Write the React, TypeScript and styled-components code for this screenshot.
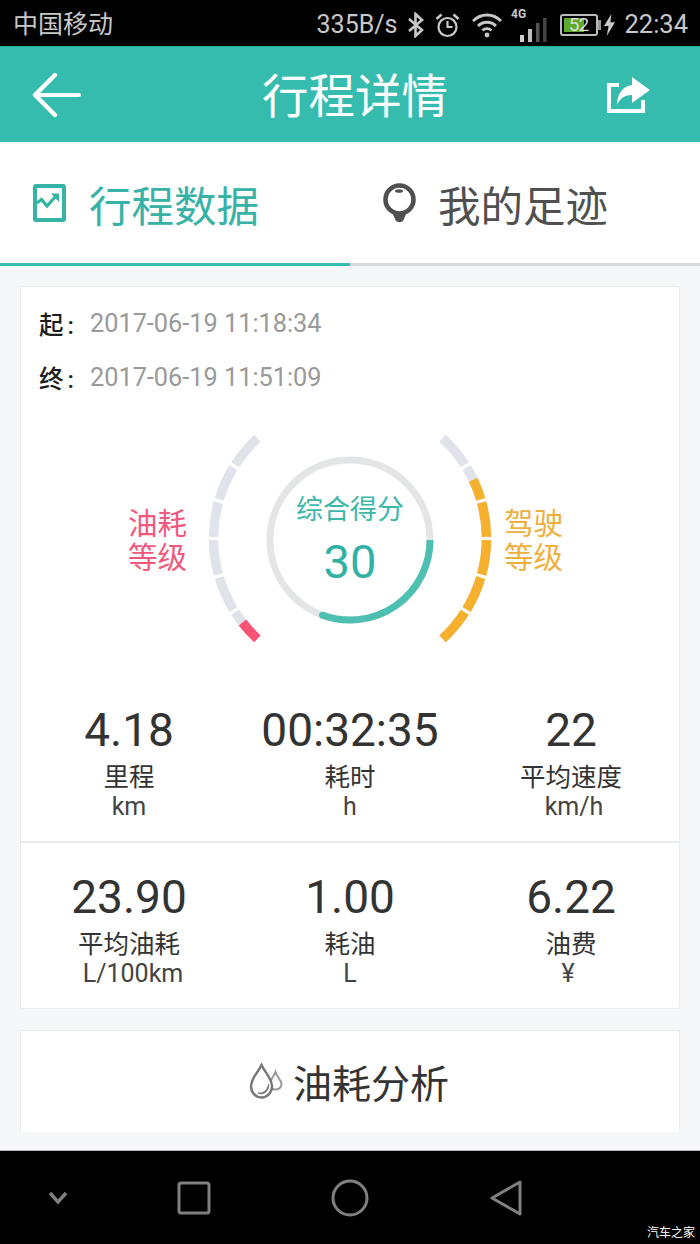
import React from "react";
import styled, { createGlobalStyle } from "styled-components";

const Global = createGlobalStyle`
  html, body { margin: 0; padding: 0; background: #000; }
  * { box-sizing: border-box; }
`;
const CJK = `Roboto, "Noto Sans CJK SC", sans-serif`;
const Page = styled.div`
  width: 700px; height: 1244px; overflow: hidden; display: flex; flex-direction: column;
  font-family: ${CJK}; background: #f5f7f9; position: relative;
`;
const StatusBar = styled.div`
  height: 46px; flex: none; background: #000; color: #c8c8c8; display: flex; align-items: center;
  justify-content: space-between; padding: 3px 12px 0 13px; font-size: 25px; line-height: 43px;
`;
const StatusRight = styled.div`display: flex; align-items: center;`;
const StatusIcon = styled.span<{ $gap: number }>`display: inline-flex; margin-left: ${p => p.$gap}px;`;
const Speed = styled.span`font-size: 25px;`;
const Clock = styled.span`font-size: 25.5px; margin-left: 9px;`;
const Header = styled.div`
  height: 96px; flex: none; background: #36bcae; display: flex; align-items: center; justify-content: space-between;
  padding: 0 50px 0 32px; border-top: 1px solid #2fa99c;
`;
const Title = styled.div`color: #fff; font-size: 46.5px; line-height: 60px; margin: 4px 0 0 21px;`;
const Tabs = styled.div`height: 124px; flex: none; background: #fff; display: grid; grid-template-columns: 350px 350px;`;
const Tab = styled.div<{ $active?: boolean }>`
  display: flex; align-items: center; font-size: 42.5px; padding: 1px 0 0 33px; gap: ${p => (p.$active ? "23px" : "22px")};
  color: ${p => (p.$active ? "#36b2a6" : "#505050")};
  border-bottom: 3px solid ${p => (p.$active ? "#36bcae" : "#d6d8da")};
`;
const Content = styled.div`flex: 1; padding: 20px 20px 0; display: flex; flex-direction: column; gap: 21px; min-height: 0;`;
const Card = styled.div`background: #fff; border: 1px solid #ebedef; border-radius: 2px;`;
const TimeBlock = styled.div`padding: 18px 0 0 18px; display: flex; flex-direction: column; gap: 18px;`;
const TimeRow = styled.div`display: flex; align-items: center; height: 36px; gap: 15px;`;
const TimeLabel = styled.span`font-size: 24.5px; font-weight: 500; letter-spacing: 4px; color: #1c1c1c; width: 36px; white-space: nowrap;`;
const TimeValue = styled.span`font-size: 25.3px; color: #999;`;
const GaugeRow = styled.div`
  height: 230px; margin-top: 29px; display: grid; grid-template-columns: 179px 300px 1fr; align-items: center;
`;
const Gauge = styled.div`width: 300px; height: 230px; position: relative;`;
const GaugeCenter = styled.div`
  position: absolute; left: 0; right: 0; top: 66px; display: flex; flex-direction: column; align-items: center;
`;
const ScoreLabel = styled.div`font-size: 27px; line-height: 40px; color: #3db7aa;`;
const ScoreValue = styled.div`font-size: 47px; line-height: 63px; color: #2fb2a4;`;
const GradeLabel = styled.div<{ $color: string; $left?: boolean }>`
  width: 59px; font-size: 29.5px; line-height: 34px; color: ${p => p.$color}; text-align: center; margin-top: 3px;
  ${p => (p.$left ? "justify-self: end; margin-right: 13px;" : "justify-self: start; margin-left: 4px;")}
`;
const Stats = styled.div<{ $divided?: boolean; $h: number; $pt: number }>`
  display: grid; grid-template-columns: 216px 1fr 216px; height: ${p => p.$h}px; padding-top: ${p => p.$pt}px;
  ${p => (p.$divided ? "border-top: 2px solid #e9ebed;" : "")}
`;
const Stat = styled.div`display: flex; flex-direction: column; align-items: center;`;
const StatValue = styled.div`font-size: 46px; line-height: 56px; color: #333;`;
const StatLabel = styled.div`font-size: 25.5px; line-height: 34px; color: #333; margin-top: 2px;`;
const StatUnit = styled.div<{ $dx: number }>`font-size: 25px; line-height: 26px; color: #444; margin-left: ${p => p.$dx}px;`;
const AnalysisCard = styled(Card)`
  height: 102px; display: flex; align-items: center; justify-content: center; gap: 10px; border-bottom: none;
  font-size: 39px; color: #333; padding-bottom: 2px; padding-right: 2px;
`;
const Nav = styled.div`
  height: 94px; flex: none; background: #000; border-top: 1px solid #b5b7b9; display: grid;
  grid-template-columns: 116px 1fr;
`;
const NavSide = styled.div`display: flex; align-items: center; justify-content: center;`;
const NavIcons = styled.div`display: flex; align-items: center; padding-left: 61px; gap: 120px;`;
const Watermark = styled.div`position: absolute; right: 5px; bottom: 2px; color: #fff; font-size: 12px; line-height: 17px;`;
const Battery = styled.span`
  position: relative; display: inline-flex; align-items: center; justify-content: center; width: 38px; height: 22px;
  border: 2px solid #bbb; border-radius: 3px; font-size: 19px; line-height: 18px; color: #ddd; margin-left: 13px; overflow: hidden;
`;
const BatteryCap = styled.i`width: 3px; height: 10px; background: #999; margin-right: 3px;`;
const BatteryFill = styled.i`position: absolute; left: 2px; top: 2px; bottom: 2px; width: 20px; background: #5da928;`;
const BatteryText = styled.b`position: relative; font-weight: 400; letter-spacing: -1px; left: -1px;`;

const segs = [-48, -32, -16, 0, 16, 32];
const G = { cx: 150, cy: 114.5, r: 136.5 };
const pt = (r: number, a: number) => [G.cx + r * Math.cos((a * Math.PI) / 180), G.cy + r * Math.sin((a * Math.PI) / 180)];
const arc = (r: number, a: number, b: number) => {
  const [x1, y1] = pt(r, a);
  const [x2, y2] = pt(r, b);
  return `M${x1.toFixed(2)} ${y1.toFixed(2)}A${r} ${r} 0 0 1 ${x2.toFixed(2)} ${y2.toFixed(2)}`;
};
const gap = 0.7;

function GaugeSvg() {
  return (
    <svg width="300" height="230" viewBox="0 0 300 230" fill="none">
      {segs.map(s => (
        <path key={"r" + s} d={arc(G.r, s + gap, s + 16 - gap)} stroke="#e1e3ea" strokeWidth="9.5" />
      ))}
      {segs.map(s => {
        const start = Math.max(s + gap, -25.5);
        const end = s + 16 - gap;
        return end > start ? <path key={"o" + s} d={arc(G.r, start, end)} stroke="#f5b02e" strokeWidth="9.5" /> : null;
      })}
      {segs.map(s => (
        <path key={"l" + s} d={arc(G.r, 180 + s + gap, 180 + s + 16 - gap)} stroke="#e1e3ea" strokeWidth="9.5" />
      ))}
      <path d={arc(G.r, 180 - 48 + gap, 180 - 38)} stroke="#fb5376" strokeWidth="9.5" />
      <circle cx={150} cy={116} r={80} stroke="#e4e5e6" strokeWidth="7" />
      <path d="M230 116A80 80 0 0 1 122.6 191.2" stroke="#4dc0b2" strokeWidth="7" />
      <circle cx={122.6} cy={191.2} r={3.5} fill="#4dc0b2" />
    </svg>
  );
}

const Back = () => (
  <svg width="50" height="46" viewBox="0 0 50 46" fill="none" stroke="#fff" strokeWidth="4.4" strokeLinecap="round" strokeLinejoin="round">
    <path d="M23 3L3 23L23 43" />
    <path d="M5 23H47" strokeWidth="4" />
  </svg>
);
const Share = () => (
  <svg width="43" height="36" viewBox="0 0 43 36" fill="none">
    <path d="M12 8H2V34H36V23" stroke="#fff" strokeWidth="4" />
    <path d="M25 0L43 13L25 26V18C18 18 13 21 10 28C10 17 16 9 25 8Z" fill="#fff" />
  </svg>
);
const TrendIcon = () => (
  <svg width="33" height="38" viewBox="0 0 33 38" fill="none" stroke="#36b2a6" strokeWidth="4" style={{ flex: "none" }}>
    <rect x="2" y="2" width="29" height="34" rx="1" />
    <path d="M4 19L8.5 15.5L14 22L23 12" strokeWidth="3.2" />
    <path d="M18 9.5H26V18Z" fill="#36b2a6" stroke="none" />
  </svg>
);
const PinIcon = () => (
  <svg width="33" height="40" viewBox="0 0 33 40" fill="none" style={{ flex: "none" }}>
    <circle cx="16.5" cy="16.5" r="14" stroke="#505050" strokeWidth="4.6" />
    <path d="M9 29H24L20.5 37C19 40 14 40 12.5 37Z" fill="#505050" />
    <ellipse cx="16" cy="8" rx="4" ry="1.8" fill="#505050" />
  </svg>
);
const DropIcon = () => (
  <svg width="34" height="36" viewBox="0 0 34 36" fill="none" stroke="#777" style={{ flex: "none" }}>
    <path d="M26.5 9C25 14 20.5 17 20.5 21.5C20.5 24.5 23.5 26.5 26.5 26.5C29.5 26.5 32.5 24.5 32.5 21.5C32.5 17 28 14 26.5 9Z" strokeWidth="2" stroke="#999" />
    <path d="M12.5 2C9.5 9 2 15 2 23.5C2 30 7 34.5 12.5 34.5C18 34.5 23 30 23 23.5C23 15 15.5 9 12.5 2Z" strokeWidth="2.4" fill="#fff" />
    <path d="M9 30C14 31 19 27 19.5 21C20.5 27 15 33 9 30Z" fill="#777" stroke="#777" strokeWidth="1" />
  </svg>
);
const Bluetooth = () => (
  <svg width="18" height="26" viewBox="0 0 18 26" fill="none" stroke="#c8c8c8" strokeWidth="2.6">
    <path d="M2 7L15 18L8.5 24V2L15 8L2 19" />
  </svg>
);
const Alarm = () => (
  <svg width="25" height="26" viewBox="0 0 25 26" fill="none" stroke="#c8c8c8" strokeWidth="2.2">
    <circle cx="12.5" cy="15" r="9" />
    <path d="M12.5 9V15H17.5" />
    <path d="M1.5 7L6.5 2.5M23.5 7L18.5 2.5" strokeWidth="2.6" />
  </svg>
);
const Wifi = () => (
  <svg width="32" height="26" viewBox="0 0 32 26" fill="none" stroke="#c8c8c8" strokeWidth="2.8">
    <path d="M2 9C10 1 22 1 30 9" />
    <path d="M7 14C12 9 20 9 25 14" />
    <path d="M11.5 18.5C14 16 18 16 20.5 18.5" />
    <circle cx="16" cy="23" r="2.4" fill="#c8c8c8" stroke="none" />
  </svg>
);
const Signal = () => (
  <svg width="37" height="36" viewBox="0 0 37 36">
    <text x="1" y="11" fontSize="12" fontWeight="700" fill="#c8c8c8" fontFamily="Roboto, sans-serif">4G</text>
    <rect x="10" y="28" width="4" height="7" fill="#d0d0d0" />
    <rect x="18" y="22" width="4" height="13" fill="#c0c0c0" />
    <rect x="26" y="16" width="3.5" height="19" fill="#555" />
    <rect x="33" y="11" width="3.5" height="24" fill="#444" />
  </svg>
);
const Bolt = () => (
  <svg width="11" height="24" viewBox="0 0 12 24">
    <path d="M8 0L0 13H5L3 24L12 9H7Z" fill="#c8c8c8" />
  </svg>
);
const Chevron = () => (
  <svg width="20" height="14" viewBox="0 0 20 14" fill="none" stroke="#808080" strokeWidth="3.4">
    <path d="M2 2L10 11L18 2" />
  </svg>
);
const Square = () => (
  <svg width="34" height="34" viewBox="0 0 34 34" fill="none" stroke="#808080" strokeWidth="3">
    <rect x="2" y="2" width="30" height="30" rx="2" />
  </svg>
);
const Circle = () => (
  <svg width="38" height="38" viewBox="0 0 38 38" fill="none" stroke="#808080" strokeWidth="3">
    <circle cx="19" cy="19" r="17" />
  </svg>
);
const Triangle = () => (
  <svg width="34" height="38" viewBox="0 0 34 38" fill="none" stroke="#808080" strokeWidth="3" strokeLinejoin="round">
    <path d="M31 3V35L3 19Z" />
  </svg>
);

type Row = [string, string, string, number][];
const row1: Row = [["4.18", "里程", "km", 0], ["00:32:35", "耗时", "h", 0], ["22", "平均速度", "km/h", 6]];
const row2: Row = [["23.90", "平均油耗", "L/100km", 8], ["1.00", "耗油", "L", 0], ["6.22", "油费", "¥", -6]];

const StatCells = ({ rows }: { rows: Row }) => (
  <>
    {rows.map(([v, l, u, dx]) => (
      <Stat key={l}><StatValue>{v}</StatValue><StatLabel>{l}</StatLabel><StatUnit $dx={dx}>{u}</StatUnit></Stat>
    ))}
  </>
);

export default function App() {
  return (
    <Page>
      <Global />
      <StatusBar>
        <span>中国移动</span>
        <StatusRight>
          <Speed>335B/s</Speed>
          <StatusIcon $gap={10}><Bluetooth /></StatusIcon>
          <StatusIcon $gap={10}><Alarm /></StatusIcon>
          <StatusIcon $gap={11}><Wifi /></StatusIcon>
          <StatusIcon $gap={7}><Signal /></StatusIcon>
          <Battery><BatteryFill /><BatteryText>52</BatteryText></Battery>
          <BatteryCap />
          <Bolt />
          <Clock>22:34</Clock>
        </StatusRight>
      </StatusBar>
      <Header>
        <Back />
        <Title>行程详情</Title>
        <Share />
      </Header>
      <Tabs>
        <Tab $active><TrendIcon />行程数据</Tab>
        <Tab><PinIcon />我的足迹</Tab>
      </Tabs>
      <Content>
        <Card>
          <TimeBlock>
            <TimeRow><TimeLabel>起:</TimeLabel><TimeValue>2017-06-19 11:18:34</TimeValue></TimeRow>
            <TimeRow><TimeLabel>终:</TimeLabel><TimeValue>2017-06-19 11:51:09</TimeValue></TimeRow>
          </TimeBlock>
          <GaugeRow>
            <GradeLabel $left $color="#f0587e">油耗等级</GradeLabel>
            <Gauge>
              <GaugeSvg />
              <GaugeCenter>
                <ScoreLabel>综合得分</ScoreLabel>
                <ScoreValue>30</ScoreValue>
              </GaugeCenter>
            </Gauge>
            <GradeLabel $color="#efaf3c">驾驶等级</GradeLabel>
          </GaugeRow>
          <Stats $h={187} $pt={48}><StatCells rows={row1} /></Stats>
          <Stats $divided $h={167} $pt={26}><StatCells rows={row2} /></Stats>
        </Card>
        <AnalysisCard><DropIcon />油耗分析</AnalysisCard>
      </Content>
      <Nav>
        <NavSide><Chevron /></NavSide>
        <NavIcons><Square /><Circle /><Triangle /></NavIcons>
      </Nav>
      <Watermark>汽车之家</Watermark>
    </Page>
  );
}
